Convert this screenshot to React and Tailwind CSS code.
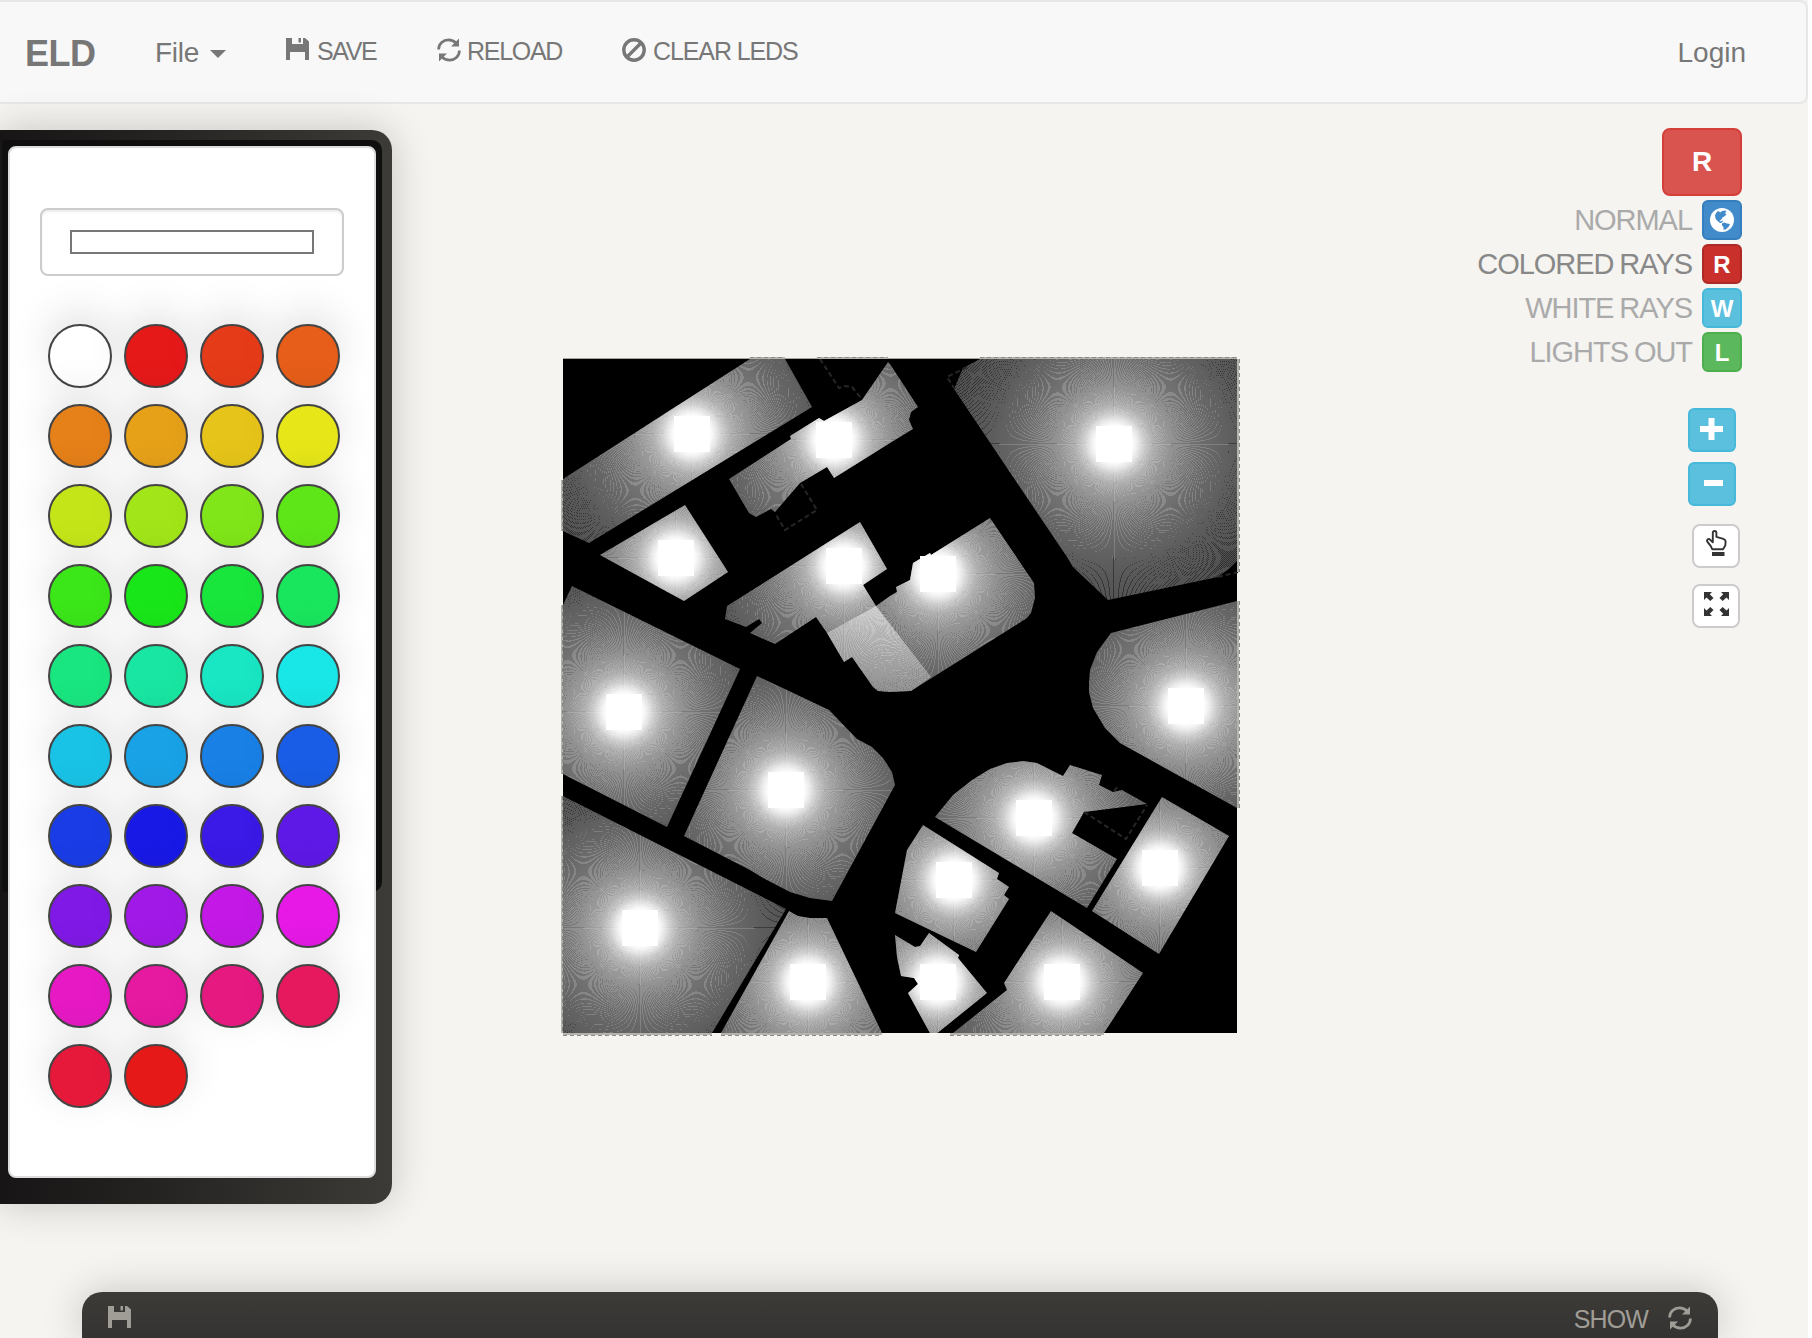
import React from "react";

const SWATCHES = ["#ffffff", ...Array.from({ length: 37 }, (_, i) => `hsl(${i * 10}, 80%, 50%)`)];

const LEDS = [
  { x: 692, y: 434, p: "750,359 785,359 812,407 589,543 563,531 563,479" },
  { x: 834, y: 440, p: "888,362 890,364 918,407 911,412 909,420 913,429 890,443 834,478 827,467 800,483 775,512 771,509 756,517 749,513 729,479 791,439 790,436 819,418 824,421 862,400" },
  { x: 676, y: 558, p: "685,505 728,572 684,601 600,555" },
  { x: 844, y: 566, p: "860,522 887,569 863,585 876,606 931,677 911,691 890,692 878,691 873,687 852,657 844,662 827,633 816,617 775,644 750,633 762,623 759,619 746,627 725,619 727,606" },
  { x: 624, y: 712, p: "572,586 740,669 667,827 563,774 563,605" },
  { x: 1114, y: 444, p: "980,359 1237,359 1237,561 1230,568 1218,577 1108,600 1073,567 1067,557 954,389 963,368" },
  { x: 938, y: 574, p: "876,606 890,596 897,592 896,587 910,580 913,563 930,553 931,555 990,518 1034,583 1035,598 1031,613 1027,618 911,691 890,692 878,691 873,687 852,657 844,662 827,633" },
  { x: 1186, y: 706, p: "1237,601 1111,633 1097,652 1090,670 1089,683 1089,692 1093,708 1105,728 1120,743 1237,808" },
  { x: 786, y: 790, p: "757,676 787,690 829,710 857,739 872,747 883,758 892,772 895,785 832,901 810,898 790,892 765,879 750,870 684,836" },
  { x: 640, y: 928, p: "563,796 786,909 712,1033 563,1033" },
  { x: 808, y: 982, p: "789,911 798,916 810,918 827,918 882,1033 721,1033" },
  { x: 1034, y: 818, p: "935,817 953,795 972,780 990,769 1007,763 1023,761 1037,763 1063,776 1070,765 1102,775 1099,785 1113,792 1122,790 1147,804 1084,812 1072,833 1117,859 1087,908" },
  { x: 954, y: 880, p: "923,825 999,873 997,879 1009,887 1004,895 1009,899 976,952 895,913 907,850" },
  { x: 1160, y: 868, p: "1162,797 1229,836 1159,954 1092,911" },
  { x: 938, y: 982, p: "895,935 915,947 920,946 929,933 959,955 958,958 987,993 935,1035 931,1035 908,993 918,984 914,978 901,976 897,957" },
  { x: 1062, y: 982, p: "1051,911 1143,973 1104,1033 953,1033 1007,990 1004,983" },
];

const RAYS = Array.from({ length: 720 }, (_, i) => {
  const a = (i * Math.PI) / 360;
  return [Math.cos(a) * 260, Math.sin(a) * 260];
});

// Light falloff: [distance from the LED centre, opacity]
const FALLOFF = [
  [18, 1],
  [24, 0.8],
  [30, 0.62],
  [39, 0.48],
  [60, 0.38],
  [80, 0.33],
  [100, 0.28],
  [130, 0.22],
  [170, 0.18],
  [260, 0.16],
];

function LightMap() {
  return (
    <svg className="block h-[686px] w-[684px]" viewBox="560 354 684 686">
      <defs>
        {LEDS.map((l, i) => (
          <clipPath key={i} id={`room${i}`}>
            <polygon points={l.p} />
          </clipPath>
        ))}
        <radialGradient id="glow">
          {FALLOFF.map(([r, o]) => (
            <stop key={r} offset={r / 260} stopColor="#fff" stopOpacity={o} />
          ))}
        </radialGradient>
      </defs>
      <rect x="563" y="358" width="674" height="1" fill="#a5a4a1" />
      <rect x="563" y="359" width="674" height="674" fill="#000" />
      {LEDS.map((l, i) => (
        <g key={i} clipPath={`url(#room${i})`}>
          <circle cx={l.x} cy={l.y} r="260" fill="url(#glow)" />
          <g stroke="#fff" strokeOpacity="0.17" strokeWidth="1" shapeRendering="crispEdges">
            {RAYS.map(([dx, dy], k) => (
              <line key={k} x1={l.x} y1={l.y} x2={l.x + dx} y2={l.y + dy} />
            ))}
          </g>
        </g>
      ))}
      <g fill="none" stroke="#262626" strokeWidth="2" strokeDasharray="5 3">
        <path d="M820 359L839 388L845 386L852 387L861 398" />
        <path d="M801 484L817 510L785 530L775 513" />
        <path d="M967 367L947 377L954 388M1218 577L1238 572" />
        <path d="M1084 812L1126 839L1147 805M1114 791L1119 785" />
      </g>
      <g fill="none" stroke="#b4b3b0" strokeWidth="2">
        <path d="M750 358H785M817 358H888M980 358H1237M562 480V531M562 605V774M562 796V1033M563 1034H712M721 1034H882M950 1034H1104M1238 359V572M1238 601V808" />
      </g>
      <g fill="none" stroke="#8a8a87" strokeWidth="1" strokeDasharray="4 3">
        <path d="M750 357.500H785M817 357.500H888M980 357.500H1237M562.500 480V531M562.500 605V774M562.500 796V1033M563 1035.500H712M721 1035.500H882M950 1035.500H1104M1239.500 359V572M1239.500 601V808" />
      </g>
      {LEDS.map((l, i) => (
        <rect key={i} x={l.x - 18} y={l.y - 18} width="36" height="36" fill="#fff" />
      ))}
    </svg>
  );
}

const Floppy = ({ className }) => (
  <svg className={className} viewBox="0 0 23 22" fill="currentColor">
    <path d="M0 0H6V6H17V0H19L23 3.500V22H19V14H4V22H0ZM12.500 0H15V4.500H12.500Z" />
  </svg>
);

const Refresh = ({ className }) => (
  <svg className={className} viewBox="0 0 24 24">
    <g fill="none" stroke="currentColor" strokeWidth="2.700">
      <path d="M1.600 11.500C1.600 5.800 6.200 1.900 11.500 1.900C14.600 1.900 17.200 3.200 19 5.200" />
      <path d="M22.400 12.500C22.400 18.200 17.800 22.100 12.500 22.100C9.400 22.100 6.800 20.800 5 18.800" />
    </g>
    <path fill="currentColor" d="M22 .5V8.500H14ZM2 23.500V15.500H10Z" />
  </svg>
);

const Ban = ({ className }) => (
  <svg className={className} viewBox="0 0 24 24" fill="none" stroke="currentColor" strokeWidth="3.400">
    <circle cx="12" cy="12" r="10.200" />
    <path d="M19 5L5 19" />
  </svg>
);

const Globe = () => (
  <svg className="size-6" viewBox="0 0 24 24">
    <circle cx="12" cy="12" r="12" fill="#fff" />
    <path
      fill="#428bca"
      d="M8 3L10.500 4.500L12 3L15.500 2.500L16.500 4L14.500 5L16.500 6L15 8L12.500 9.500L11 12L9.500 12.500L11.500 14.500L10 15L7 12.500L5.500 10.500L5 7.500L6 5ZM12 15.500L14 14.500L17 15.500L20 16L18.500 19L15.500 21.500L13.500 21.800L13.500 19L12 17.500ZM10 14L12.500 12.500L13 13.500L11 15Z"
    />
  </svg>
);

const Hand = () => (
  <svg className="h-[26px] w-[21px]" viewBox="0 0 21 26">
    <path
      fill="none"
      stroke="#333"
      strokeWidth="1.900"
      strokeLinejoin="round"
      d="M6.800 12.300V3Q6.800 1 8.600 1Q10.400 1 10.400 3V6.800L17.300 8.800Q19.600 9.600 19.600 11.800L19.300 15.500L17 19.200H6.200L4.800 16.200L1.300 11.600Q.6 10.200 1.800 9.300Q3 8.500 4.300 9.800Z"
    />
    <path fill="#333" d="M6 22H18.500V26H6Z" />
  </svg>
);

const Expand = () => (
  <svg className="h-6 w-[25px]" viewBox="0 0 25 24" fill="#333">
    <path d="M0 0H8L5.800 2.200L9.500 5.900L6.300 9.100L2.500 5.500L0 8Z" />
    <path d="M25 0H17L19.200 2.200L15.500 5.900L18.700 9.100L22.500 5.500L25 8Z" />
    <path d="M0 24H8L5.800 21.800L9.500 18.100L6.300 14.900L2.500 18.500L0 16Z" />
    <path d="M25 24H17L19.200 21.800L15.500 18.100L18.700 14.900L22.500 18.500L25 16Z" />
  </svg>
);

function Header() {
  return (
    <header className="flex h-[104px] w-[1808px] items-start rounded-r-lg border-2 border-l-0 border-[#e7e7e7] bg-[#f8f8f8] text-[#777]">
      <div className="ml-[25px] mt-[34px] w-[130px] text-[36px] font-bold leading-[36px] tracking-[-0.5px]">ELD</div>
      <div className="mt-[37px] flex w-[131px] text-[28px] leading-[28px] tracking-[-0.3px]">
        File
        <span className="ml-[11px] mt-[11px] h-0 w-0 border-x-8 border-t-8 border-x-transparent border-t-[#777]" />
      </div>
      <div className="flex w-[151px] text-[25px] leading-[25px] tracking-[-1.4px]">
        <Floppy className="mt-9 h-[22px] w-[23px]" />
        <span className="ml-2 mt-[37px]">SAVE</span>
      </div>
      <div className="flex w-[185px] text-[25px] leading-[25px] tracking-[-1.3px]">
        <Refresh className="mt-9 size-6" />
        <span className="ml-1.5 mt-[37px]">RELOAD</span>
      </div>
      <div className="flex text-[25px] leading-[25px] tracking-[-1.100px]">
        <Ban className="mt-9 size-6" />
        <span className="ml-[7px] mt-[37px] whitespace-nowrap">CLEAR LEDS</span>
      </div>
      <div className="ml-auto mr-[60px] mt-[37px] text-[28px] leading-[28px]">Login</div>
    </header>
  );
}

function Palette() {
  return (
    <aside className="mt-[26px] h-[1074px] w-[392px] rounded-r-[20px] bg-linear-to-r from-[#171515] to-[#3c3b37] pt-2.5 shadow-[0_0_40px_rgba(0,0,0,0.2)]">
      <div className="ml-0.5 h-[752px] w-[380px] rounded-r-[10px] bg-[#0f0f0f] pl-1.5 pt-1.5">
        <div className="h-[1032px] w-[368px] rounded-lg border-2 border-[#ddd] bg-white pl-[30px] pt-[60px]">
          <div className="h-[68px] w-[304px] rounded-lg border-2 border-[#ccc] px-7 py-5 shadow-[inset_0_2px_2px_rgba(0,0,0,0.075)]">
            <div className="h-6 border-2 border-[#777]" />
          </div>
          <div className="ml-2 mt-12 grid w-[292px] grid-cols-4 gap-x-3 gap-y-4">
            {SWATCHES.map((c, i) => (
              <div
                key={i}
                className="size-16 rounded-full border-2 border-[#444] shadow-[0_-12px_40px_rgba(0,0,0,0.12)]"
                style={{ backgroundColor: c }}
              />
            ))}
          </div>
        </div>
      </div>
    </aside>
  );
}

const Mode = ({ label, labelClass, btnClass, children }) => (
  <div className="flex h-10 items-center justify-end">
    <span className={`mr-2.5 whitespace-nowrap text-[29px] leading-[40px] tracking-[-1.05px] [word-spacing:-1px] ${labelClass}`}>{label}</span>
    <button className={`flex size-10 items-center justify-center rounded-md border-2 text-2xl font-bold text-white ${btnClass}`}>
      {children}
    </button>
  </div>
);

function Tools() {
  return (
    <div className="mr-[66px] mt-6 flex w-[300px] flex-col items-end">
      <button className="h-[68px] w-20 rounded-lg border-2 border-[#d43f3a] bg-[#d9534f] text-[28px] font-bold text-white">R</button>
      <div className="mt-1 flex flex-col gap-1">
        <Mode label="NORMAL" labelClass="text-[#aaa]" btnClass="border-[#357ebd] bg-[#428bca]">
          <Globe />
        </Mode>
        <Mode label="COLORED RAYS" labelClass="text-[#888]" btnClass="border-[#ac2925] bg-[#c9302c] pt-0.5">R</Mode>
        <Mode label="WHITE RAYS" labelClass="text-[#aaa]" btnClass="border-[#46b8da] bg-[#5bc0de] pt-0.5">W</Mode>
        <Mode label="LIGHTS OUT" labelClass="text-[#aaa]" btnClass="border-[#4cae4c] bg-[#5cb85c] pt-0.5">L</Mode>
      </div>
      <button className="mr-1.5 mt-9 flex h-11 w-12 justify-center rounded-md border-2 border-[#46b8da] bg-[#5bc0de] pr-0.5 pt-2">
        <svg className="h-[22px] w-[23px]" viewBox="0 0 23 22" fill="#fff">
          <path d="M8.500 0H14.500V8H23V14H14.500V22H8.500V14H0V8H8.500Z" />
        </svg>
      </button>
      <button className="mr-1.5 mt-2.5 flex h-11 w-12 justify-center rounded-md border-2 border-[#46b8da] bg-[#5bc0de] pt-4">
        <span className="ml-[3px] h-1.5 w-[19px] bg-white" />
      </button>
      <button className="mr-0.5 mt-[18px] flex h-11 w-12 justify-center rounded-lg border-2 border-[#ccc] bg-white pt-1">
        <Hand />
      </button>
      <button className="mr-0.5 mt-4 flex h-11 w-12 justify-center rounded-lg border-2 border-[#ccc] bg-white pt-1.5">
        <Expand />
      </button>
    </div>
  );
}

export default function App() {
  return (
    <div className="h-[1338px] w-[1812px] overflow-hidden bg-white font-['Liberation_Sans',Arial,sans-serif]">
      <div className="flex h-full w-[1808px] flex-col bg-[#f5f4f0]">
        <Header />
        <main className="flex h-[1188px] items-start">
          <Palette />
          <div className="ml-[168px] mt-[250px]">
            <LightMap />
          </div>
          <div className="flex-1" />
          <Tools />
        </main>
        <footer className="ml-[82px] flex h-[46px] w-[1636px] shrink-0 items-start rounded-t-[20px] bg-linear-to-b from-[#3c3b37] to-[#353332] px-[26px] text-[#a09d97] shadow-[0_0_40px_rgba(0,0,0,0.2)]">
          <Floppy className="mt-3.5 h-[22px] w-[23px]" />
          <span className="ml-auto mt-[15px] text-[25px] leading-[25px] tracking-[-0.9px]">SHOW</span>
          <Refresh className="ml-5 mt-3.5 size-6" />
        </footer>
      </div>
    </div>
  );
}
